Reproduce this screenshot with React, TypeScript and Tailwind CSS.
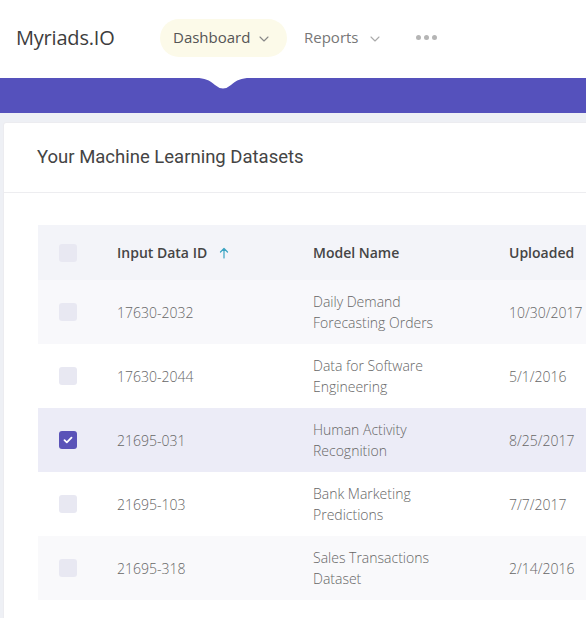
import React from "react";

const rows = [
  { id: "17630-2032", name: ["Daily Demand", "Forecasting Orders"], date: "10/30/2017", bg: "bg-[#f8f8fb]", checked: false },
  { id: "17630-2044", name: ["Data for Software", "Engineering"], date: "5/1/2016", bg: "bg-white", checked: false },
  { id: "21695-031", name: ["Human Activity", "Recognition"], date: "8/25/2017", bg: "bg-[#ececf7]", checked: true },
  { id: "21695-103", name: ["Bank Marketing", "Predictions"], date: "7/7/2017", bg: "bg-white", checked: false },
  { id: "21695-318", name: ["Sales Transactions", "Dataset"], date: "2/14/2016", bg: "bg-[#f9f9fb]", checked: false },
];

function Chevron({ className }: { className?: string }) {
  return (
    <svg className={className} width="10" height="6" viewBox="0 0 10 6" fill="none">
      <path d="M1 1l4 4 4-4" stroke="currentColor" strokeWidth="1.1" strokeLinecap="round" strokeLinejoin="round" />
    </svg>
  );
}

function Box({ checked }: { checked: boolean }) {
  if (checked) {
    return (
      <div className="w-[18px] h-[18px] rounded-[3px] bg-[#5a53b8] flex items-center justify-center">
        <svg width="10" height="8" viewBox="0 0 10 8" fill="none">
          <path d="M1.5 4.2l2.3 2.2L8.5 1.6" stroke="white" strokeWidth="1.8" strokeLinecap="round" strokeLinejoin="round" />
        </svg>
      </div>
    );
  }
  return <div className="w-[18px] h-[18px] rounded-[3px] bg-[#e8e8f2]" />;
}

export default function App() {
  const font = { fontFamily: '"Open Sans", "Noto Sans", sans-serif' };
  return (
    <div className="w-[586px] h-[618px] overflow-hidden bg-[#eef0f5] relative" style={font}>
      {/* Top header */}
      <header className="h-[78px] bg-white flex items-center pb-[3px]">
        <div className="pl-[16px] w-[160px] text-[20px] font-medium text-[#3d3d3d] tracking-[-0.2px]">Myriads.IO</div>
        <nav className="flex items-center">
          <div className="h-[38px] w-[127px] rounded-full bg-[#fcfae9] flex items-center pl-[13px] text-[15px] text-[#555]">
            <span>Dashboard</span>
            <Chevron className="ml-[9px] mt-[2px] text-[#888]" />
          </div>
          <div className="ml-[17px] flex items-center text-[15px] text-[#777]">
            <span>Reports</span>
            <Chevron className="ml-[11px] mt-[2px] text-[#aaa]" />
          </div>
          <div className="ml-[36px] flex items-center gap-[3px]">
            <span className="w-[5px] h-[5px] rounded-full bg-[#b5b5b5]" />
            <span className="w-[5px] h-[5px] rounded-full bg-[#b5b5b5]" />
            <span className="w-[5px] h-[5px] rounded-full bg-[#b5b5b5]" />
          </div>
        </nav>
      </header>

      {/* Purple bar */}
      <div className="h-[35px] bg-[#5551bc] relative">
        <svg className="absolute left-[196px] top-0" width="54" height="13" viewBox="0 0 54 13">
          <path d="M0 0 C9 0 13 2 19 7 Q27 14 35 7 C41 2 45 0 54 0 Z" fill="white" />
        </svg>
      </div>

      {/* Card */}
      <div className="mt-[9px] ml-[3px] w-[800px] bg-white border border-[#ececf0] rounded-[3px]">
        <div className="h-[70px] flex items-center pl-[33px] border-b border-[#ededf0]">
          <h1 className="text-[18.5px] text-[#444] font-normal" style={{ fontFamily: 'Roboto, "Liberation Sans", sans-serif' }}>
            Your Machine Learning Datasets
          </h1>
        </div>

        <div className="pt-[32px] pl-[34px]">
          <div className="grid grid-cols-[79px_196px_196px_240px] h-[55px] items-center bg-[#f3f4f9] text-[14px] font-semibold text-[#454545]">
            <div className="pl-[21px]"><Box checked={false} /></div>
            <div className="flex items-center">
              <span>Input Data ID</span>
              <svg className="ml-[12px]" width="10" height="12" viewBox="0 0 10 12" fill="none">
                <path d="M5 11V1.5M1.5 5L5 1.5 8.5 5" stroke="#3aa3c2" strokeWidth="1.2" strokeLinecap="round" strokeLinejoin="round" />
              </svg>
            </div>
            <div>Model Name</div>
            <div>Uploaded</div>
          </div>
          {rows.map((r) => (
            <div key={r.id} className={`grid grid-cols-[79px_196px_196px_240px] h-[64px] items-center text-[14px] font-light text-[#666] ${r.bg}`}>
              <div className="pl-[21px]"><Box checked={r.checked} /></div>
              <div>{r.id}</div>
              <div className="leading-[21px]">
                <div>{r.name[0]}</div>
                <div>{r.name[1]}</div>
              </div>
              <div>{r.date}</div>
            </div>
          ))}
          <div className="h-[40px]" />
        </div>
      </div>
    </div>
  );
}
